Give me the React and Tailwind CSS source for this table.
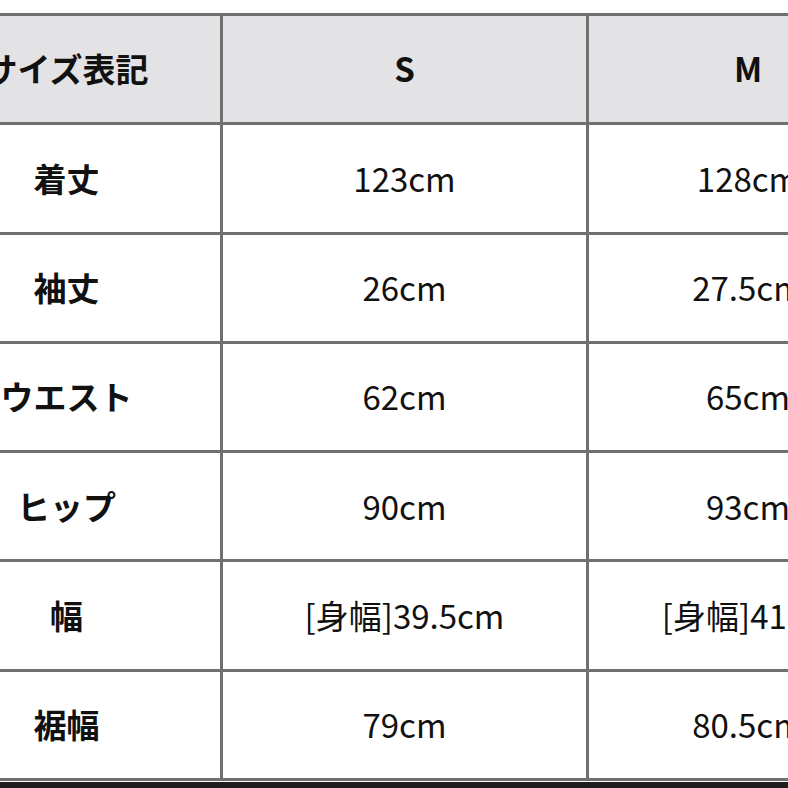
export default function App() {
  const rows = [
    ["着丈", "123cm", "128cm"],
    ["袖丈", "26cm", "27.5cm"],
    ["ウエスト", "62cm", "65cm"],
    ["ヒップ", "90cm", "93cm"],
    ["幅", "[身幅]39.5cm", "[身幅]41cm"],
    ["裾幅", "79cm", "80.5cm"],
  ];
  const font = { fontFamily: '"Noto Sans CJK JP", "Noto Sans", sans-serif' };
  return (
    <div className="w-[788px] h-[788px] overflow-hidden bg-white pt-[13px]" style={font}>
      <div className="ml-[-87px] w-[1000px] border-t-[3px] border-[#707070]">
        <div className="flex h-[109.3px] border-b-[3px] border-[#707070] bg-[#e3e2e4]">
          <div className="w-[307px] shrink-0 flex items-center justify-center text-[33px] font-bold text-[#111] whitespace-nowrap">サイズ表記</div>
          <div className="w-[369px] shrink-0 border-x-[3px] border-[#707070] flex items-center justify-center text-[33px] font-bold text-[#111]">S</div>
          <div className="w-[318px] shrink-0 flex items-center justify-center text-[33px] font-bold text-[#111]">M</div>
        </div>
        {rows.map((r) => (
          <div key={r[0]} className="flex h-[109.3px] border-b-[3px] border-[#707070] bg-white">
            <div className="w-[307px] shrink-0 flex items-center justify-center text-[33px] font-bold text-[#111] whitespace-nowrap">{r[0]}</div>
            <div className="w-[369px] shrink-0 border-x-[3px] border-[#707070] flex items-center justify-center text-[33px] text-[#111] whitespace-nowrap">{r[1]}</div>
            <div className="w-[318px] shrink-0 flex items-center justify-center text-[33px] text-[#111] whitespace-nowrap">{r[2]}</div>
          </div>
        ))}
      </div>
      <div className="mt-[1px] h-[8px] bg-[#1e1e1e]"></div>
    </div>
  );
}
